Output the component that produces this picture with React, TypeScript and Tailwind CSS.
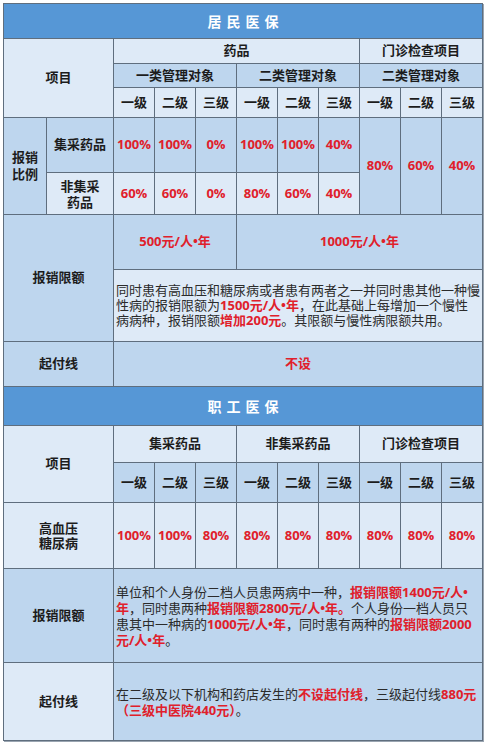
import type { ReactNode } from 'react';

// cell colours
const LIGHT = 'bg-[#deeaf7]';
const MID = 'bg-[#bed6ee]';

function Cell({ className, children }: { className: string; children?: ReactNode }) {
    return (
        <div className={`flex items-center justify-center text-center ${className}`}>
            {children}
        </div>
    );
}

function Red({ children }: { children: ReactNode }) {
    return <span className="font-bold text-[#e0202b]">{children}</span>;
}

const levels = ['一级', '二级', '三级'];

export default function App() {
    return (
        <div className="w-[486px] h-[744px] bg-white pt-[3px] pl-[3px] font-['Open_Sans','Noto_Sans_CJK_SC',sans-serif] text-[13px] text-[#1c1c1c]">
            <div className="w-[480px] grid grid-cols-[42px_66px_repeat(8,40px)_1fr] grid-rows-[34px_24px_23px_29px_54px_41px_54px_71px_44px_38px_36px_39px_65px_93px_77px] gap-px bg-[#5f6e7e] p-px shadow-[1px_1px_0_#9aa5b1]">
                {/* 居民医保 */}
                <Cell className="col-start-1 col-end-12 row-start-1 bg-[#5697d6] text-white text-[14px] font-bold tracking-[5px] pl-[5px]">
                    居民医保
                </Cell>
                <Cell className={`col-start-1 col-end-3 row-start-2 row-end-5 font-bold ${LIGHT}`}>项目</Cell>
                <Cell className={`col-start-3 col-end-9 row-start-2 font-bold ${LIGHT}`}>药品</Cell>
                <Cell className={`col-start-9 col-end-12 row-start-2 font-bold ${LIGHT}`}>门诊检查项目</Cell>
                <Cell className={`col-start-3 col-end-6 row-start-3 font-bold ${MID}`}>一类管理对象</Cell>
                <Cell className={`col-start-6 col-end-9 row-start-3 font-bold ${MID}`}>二类管理对象</Cell>
                <Cell className={`col-start-9 col-end-12 row-start-3 font-bold ${MID}`}>二类管理对象</Cell>
                {[0, 1, 2].flatMap((g) =>
                    levels.map((l) => (
                        <Cell key={`a${g}${l}`} className={`row-start-4 font-bold ${LIGHT}`}>
                            {l}
                        </Cell>
                    ))
                )}

                <Cell className={`col-start-1 row-start-5 row-end-7 font-bold leading-[17px] ${MID}`}>
                    报销
                    <br />
                    比例
                </Cell>
                <Cell className={`col-start-2 row-start-5 font-bold ${MID}`}>集采药品</Cell>
                {['100%', '100%', '0%', '100%', '100%', '40%'].map((v, i) => (
                    <Cell key={`b${i}`} className={`row-start-5 ${MID}`}>
                        <Red>{v}</Red>
                    </Cell>
                ))}
                <Cell className={`col-start-9 row-start-5 row-end-7 ${MID}`}>
                    <Red>80%</Red>
                </Cell>
                <Cell className={`col-start-10 row-start-5 row-end-7 ${MID}`}>
                    <Red>60%</Red>
                </Cell>
                <Cell className={`col-start-11 row-start-5 row-end-7 ${MID}`}>
                    <Red>40%</Red>
                </Cell>
                <Cell className={`col-start-2 row-start-6 font-bold leading-[16px] ${LIGHT}`}>
                    非集采
                    <br />
                    药品
                </Cell>
                {['60%', '60%', '0%', '80%', '60%', '40%'].map((v, i) => (
                    <Cell key={`c${i}`} className={`row-start-6 ${LIGHT}`}>
                        <Red>{v}</Red>
                    </Cell>
                ))}

                <Cell className={`col-start-1 col-end-3 row-start-7 row-end-9 font-bold ${MID}`}>报销限额</Cell>
                <Cell className={`col-start-3 col-end-6 row-start-7 ${MID}`}>
                    <Red>500元/人•年</Red>
                </Cell>
                <Cell className={`col-start-6 col-end-12 row-start-7 ${MID}`}>
                    <Red>1000元/人•年</Red>
                </Cell>
                <Cell className={`col-start-3 col-end-12 row-start-8 justify-start text-left pl-[2px] leading-[15px] text-[#2b2b2b] ${LIGHT}`}>
                    <p>
                        同时患有高血压和糖尿病或者患有两者之一并同时患其他一种慢
                        <br />
                        性病的报销限额为<Red>1500元/人•年</Red>，在此基础上每增加一个慢性
                        <br />
                        病病种，报销限额<Red>增加200元</Red>。其限额与慢性病限额共用。
                    </p>
                </Cell>

                <Cell className={`col-start-1 col-end-3 row-start-9 font-bold ${MID}`}>起付线</Cell>
                <Cell className={`col-start-3 col-end-12 row-start-9 ${MID}`}>
                    <Red>不设</Red>
                </Cell>

                {/* 职工医保 */}
                <Cell className="col-start-1 col-end-12 row-start-10 bg-[#5697d6] text-white text-[14px] font-bold tracking-[5px] pl-[5px]">
                    职工医保
                </Cell>
                <Cell className={`col-start-1 col-end-3 row-start-11 row-end-13 font-bold ${LIGHT}`}>项目</Cell>
                <Cell className={`col-start-3 col-end-6 row-start-11 font-bold ${LIGHT}`}>集采药品</Cell>
                <Cell className={`col-start-6 col-end-9 row-start-11 font-bold ${LIGHT}`}>非集采药品</Cell>
                <Cell className={`col-start-9 col-end-12 row-start-11 font-bold ${LIGHT}`}>门诊检查项目</Cell>
                {[0, 1, 2].flatMap((g) =>
                    levels.map((l) => (
                        <Cell key={`d${g}${l}`} className={`row-start-12 font-bold ${MID}`}>
                            {l}
                        </Cell>
                    ))
                )}

                <Cell className={`col-start-1 col-end-3 row-start-13 font-bold leading-[15px] ${LIGHT}`}>
                    高血压
                    <br />
                    糖尿病
                </Cell>
                {['100%', '100%', '80%', '80%', '80%', '80%', '80%', '80%', '80%'].map((v, i) => (
                    <Cell key={`e${i}`} className={`row-start-13 ${LIGHT}`}>
                        <Red>{v}</Red>
                    </Cell>
                ))}

                <Cell className={`col-start-1 col-end-3 row-start-14 font-bold ${MID}`}>报销限额</Cell>
                <Cell className={`col-start-3 col-end-12 row-start-14 justify-start text-left pl-[2px] leading-[16px] text-[#2b2b2b] ${MID}`}>
                    <p>
                        单位和个人身份二档人员患两病中一种，<Red>报销限额1400元/人•</Red>
                        <br />
                        <Red>年</Red>，同时患两种<Red>报销限额2800元/人•年。</Red>个人身份一档人员只
                        <br />
                        患其中一种病的<Red>1000元/人•年</Red>，同时患有两种的<Red>报销限额2000</Red>
                        <br />
                        <Red>元/人•年</Red>。
                    </p>
                </Cell>

                <Cell className={`col-start-1 col-end-3 row-start-15 font-bold ${LIGHT}`}>起付线</Cell>
                <Cell className={`col-start-3 col-end-12 row-start-15 justify-start text-left pl-[2px] leading-[16px] text-[#2b2b2b] ${MID}`}>
                    <p>
                        在二级及以下机构和药店发生的<Red>不设起付线</Red>，三级起付线<Red>880元</Red>
                        <br />
                        <Red>（三级中医院440元）</Red>。
                    </p>
                </Cell>
            </div>
        </div>
    );
}
